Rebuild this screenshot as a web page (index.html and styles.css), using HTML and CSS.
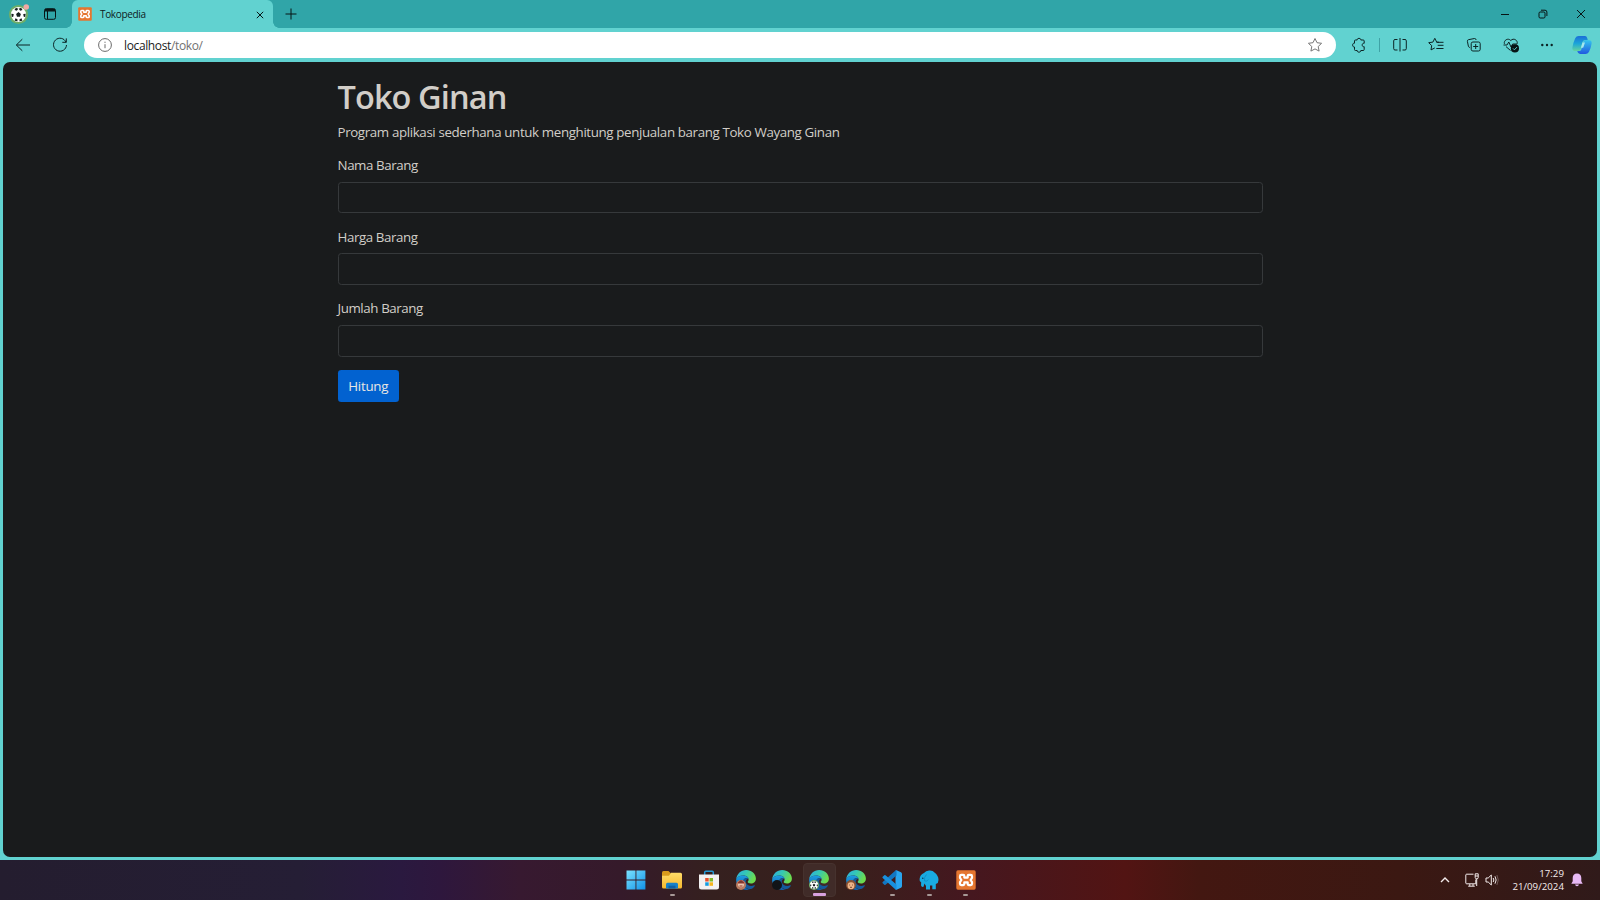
FILE: index.html
```html
<!DOCTYPE html>
<html lang="id">
<head>
<meta charset="utf-8">
<title>Tokopedia</title>
<link rel="stylesheet" href="styles.css">
</head>
<body>
<svg class="defs" width="0" height="0">
  <defs>
    <linearGradient id="edgeBlue" x1="0" y1="0" x2="0" y2="1"><stop offset="0" stop-color="#1b9de2"/><stop offset="1" stop-color="#1161b0"/></linearGradient>
    <linearGradient id="edgeGreen" x1="0" y1="0" x2="1" y2=".4"><stop offset="0" stop-color="#2aa9e8"/><stop offset=".5" stop-color="#35c8b4"/><stop offset="1" stop-color="#6cdc4e"/></linearGradient>
    <linearGradient id="winBlue" x1="0" y1="0" x2="1" y2="1"><stop offset="0" stop-color="#7be3ff"/><stop offset="1" stop-color="#1192e8"/></linearGradient>
    <linearGradient id="folder" x1="0" y1="0" x2="0" y2="1"><stop offset="0" stop-color="#ffdc69"/><stop offset="1" stop-color="#f5b82e"/></linearGradient>
    <linearGradient id="copA" x1="0" y1="0" x2="0" y2="1"><stop offset="0" stop-color="#1a6ed8"/><stop offset=".5" stop-color="#1ba5d8"/><stop offset="1" stop-color="#63d3a0"/></linearGradient>
    <linearGradient id="copB" x1="0" y1="0" x2="0" y2="1"><stop offset="0" stop-color="#35c4ee"/><stop offset="1" stop-color="#2159e0"/></linearGradient>
    <symbol id="edge" viewBox="0 0 20 20">
      <path d="M.2 9.300C.8 4 5 .1 10.200.1 15.600.1 19.900 3.900 19.900 8.500c0 3.200-2.300 5-4.900 5-2.100 0-3.300-.8-3.300-1.500 0-.7.9-.9.9-2.500C12.600 7.200 10.200 5.600 7.300 5.600 3.900 5.600 1 7.300.2 9.300z" fill="url(#edgeGreen)"/>
      <path d="M.1 10C.300 7.400 3.500 5.600 7.300 5.600c2.800 0 5.300 1.600 5.300 3.900-.6-.9-1.700-1.400-2.800-1.200-2.200.5-3.200 2.900-2.700 5.200.6 3.100 3.500 5.800 6.500 6C6.600 21.300.1 16.500.1 10z" fill="url(#edgeBlue)"/>
      <path d="M9.800 8.300C7.200 8.800 6.500 11.600 7.200 14c1 3.400 4.500 5.700 7.500 5.100 1.700-.6 3.100-1.700 4.100-3.200.3-.5-.1-.8-.6-.6-3.600 1.500-7.300.1-8.200-2.500-.6-1.900.2-3.400 1.900-4.100-.6-.4-1.300-.5-2.100-.4z" fill="#145a9c"/>
    </symbol>
    <symbol id="xampp" viewBox="0 0 20 20">
      <rect x=".3" y=".3" width="19.400" height="19.400" rx="1.600" fill="#e57630"/>
      <path d="M5.300 4.900H7.300Q8.300 4.900 8.300 5.900V7.600H11.700V5.900Q11.700 4.900 12.700 4.900H14.700Q16 4.900 16 6.200V7.800L14.600 10 16 12.200V13.800Q16 15.100 14.700 15.100H12.700Q11.700 15.100 11.700 14.100V12.400H8.300V14.100Q8.300 15.100 7.300 15.100H5.300Q4 15.100 4 13.800V12.200L5.400 10 4 7.800V6.200Q4 4.900 5.300 4.900z" fill="none" stroke="#fff" stroke-width="2.200" stroke-linejoin="round"/>
    </symbol>
    <symbol id="ball" viewBox="0 0 20 20">
      <circle cx="10" cy="10" r="9.500" fill="#fff"/>
      <path d="M10 7l3 2.300-1.100 3.500H8.100L7 9.300zM6.700 1.500l3 1.200-1.800 2.500-2.900-.7zM13.300 1.500l-3 1.200 1.800 2.500 2.900-.7zM1 9L4 9.500l-.4 3-2 1zM19 9L16 9.500l.4 3 2 1zM5.200 17.700l1-2.900 2.500 1.100v2.500zM14.800 17.700l-1-2.900-2.500 1.100v2.500z" fill="#17201f"/>
    </symbol>
  </defs>
</svg>

<div class="screen">
  <header class="tabbar">
    <svg class="avatar" viewBox="0 0 22 22"><circle cx="10.500" cy="11.500" r="9.600" fill="#6fae68"/><use href="#ball" x="2.500" y="3.500" width="16" height="16"/><circle cx="18.200" cy="4" r="2.800" fill="#f0a9a5"/></svg>
    <svg class="workspace ink" viewBox="0 0 14 14"><rect x="1.500" y="1.700" width="11" height="10.600" rx="1.800"/><path d="M1.500 4H12.500M4.500 4V12"/><path d="M2 2.900H12" stroke-width="2"/></svg>
    <div class="tab">
      <svg class="favicon"><use href="#xampp"/></svg>
      <span class="tab-title">Tokopedia</span>
      <svg class="tab-close ink" viewBox="0 0 8 8"><path d="M.8.8L7.200 7.200M7.200.8L.8 7.200"/></svg>
    </div>
    <svg class="newtab ink" viewBox="0 0 12 12"><path d="M6 .5V11.500M.5 6H11.500"/></svg>
    <div class="window-controls">
      <svg class="ink" viewBox="0 0 10 10"><path d="M1 5.500H9"/></svg>
      <svg class="ink" viewBox="0 0 10 10"><rect x="1" y="3" width="6" height="6" rx="1.200"/><path d="M3 1.200H7Q8.900 1.200 8.900 3.100V7"/></svg>
      <svg class="ink" viewBox="0 0 10 10"><path d="M1 1L9 9M9 1L1 9"/></svg>
    </div>
  </header>

  <nav class="toolbar">
    <svg class="tool back" viewBox="0 0 24 24"><path d="M19 12H5.500M11.300 6.200L5.300 12l6 5.800"/></svg>
    <svg class="tool reload" viewBox="0 0 24 24"><path d="M18 9.200A6.500 6.500 0 1 0 18.500 12M18.300 5.400V9.300H14.300"/></svg>
    <div class="address">
      <svg class="info" viewBox="0 0 14 14"><circle cx="7" cy="7" r="6.400"/><path d="M7 6.200V10.200M7 3.700V4.900"/></svg>
      <span class="url">localhost<span class="path">/toko/</span></span>
      <svg class="star" viewBox="0 0 16 16"><path d="M8 1.500l2 4.200 4.600.6-3.400 3.200.9 4.600L8 11.900l-4.100 2.200.9-4.600L1.400 6.300 6 5.700z"/></svg>
    </div>
    <svg class="tool puzzle" viewBox="0 0 24 24"><path d="M8.500 7H10.200C9.700 4.800 14.300 4.800 13.800 7H16.200Q17.200 7 17.200 8V10.300C14.500 9.700 14.500 14.300 17.200 13.700V16.500Q17.200 17.500 16.200 17.500H13.800C14.300 19.700 9.700 19.700 10.200 17.500H8.500Q7.500 17.500 7.500 16.500V14C5 14.400 5 9.700 7.500 10.200V8Q7.500 7 8.500 7z"/></svg>
    <i class="divider"></i>
    <svg class="tool split" viewBox="0 0 24 24"><path d="M9.500 6.500H7Q5.700 6.500 5.700 7.800V15.700Q5.700 17 7 17H9.500M14.500 6.500H17Q18.300 6.500 18.300 7.800V15.700Q18.300 17 17 17H14.500M12 5V18.500"/></svg>
    <svg class="tool" viewBox="0 0 24 24"><path d="M14 9.300L11.700 9.100 9.800 5.300 7.900 9.100 3.700 9.700 6.700 12.600 6 16.900 9.800 14.900M11.500 9.300H18.500M12.700 12.300H18.500M11.300 15.500H18.500"/></svg>
    <svg class="tool" viewBox="0 0 24 24"><rect x="9.200" y="9" width="9" height="9" rx="1.700"/><path d="M13.700 11V16M11.200 13.500H16.200M7.800 14.500Q6.700 14.300 6.400 13.300L5.400 8.300Q5.200 7 6.400 6.700L12.500 5.500Q13.700 5.300 14.200 7"/></svg>
    <svg class="tool" viewBox="0 0 24 24"><path d="M5.400 10.800C4.500 7.300 9 4.500 11.800 7.500 14.600 4.500 19 7.200 18.200 10.800M7 13.600L11.500 17.500M4.500 12H8L9.800 9 12 14 13.700 11H18"/><circle cx="15.900" cy="15.400" r="4.100" fill="#071415" stroke="none"/><path d="M14 15.400l1.400 1.400 2.600-2.700" stroke="#61d2d0"/></svg>
    <svg class="tool dots" viewBox="0 0 24 24"><circle cx="7.300" cy="12" r="1.200"/><circle cx="12" cy="12" r="1.200"/><circle cx="16.700" cy="12" r="1.200"/></svg>
    <svg class="copilot" viewBox="0 0 20 20"><path d="M6.700 1H13Q14.600 1 15.200 3L15.800 5.200H12.500Q11 5.200 10.500 7L8.500 14.500Q8 16 6 16H3Q0 16 .4 12.600 1 8 3.200 3.200 4.300 1 6.700 1z" fill="url(#copA)"/><path d="M13.500 5.200H17Q20 5.300 19.600 8.500 19 13 16.900 17 15.800 19 13.400 19H8Q6 19 5.200 16H7.500Q9 15.800 9.500 14L11.300 7Q11.800 5.200 13.500 5.200z" fill="url(#copB)"/><path d="M10.500 7.500H13L11.200 12.800H8.900z" fill="#a5e7ee"/></svg>
  </nav>

  <main class="viewport">
    <div class="container">
      <h1>Toko Ginan</h1>
      <p>Program aplikasi sederhana untuk menghitung penjualan barang Toko Wayang Ginan</p>
      <form>
        <div class="field"><label for="nama">Nama Barang</label><input id="nama" type="text"></div>
        <div class="field"><label for="harga">Harga Barang</label><input id="harga" type="text"></div>
        <div class="field"><label for="jumlah">Jumlah Barang</label><input id="jumlah" type="text"></div>
        <button type="button">Hitung</button>
      </form>
    </div>
  </main>

  <footer class="taskbar">
    <div class="apps">
      <div class="app"><svg viewBox="0 0 20 20"><path d="M.5.500h9v9h-9zM10.400.500h9v9h-9zM.5 10.400h9v9h-9zM10.400 10.400h9v9h-9z" fill="url(#winBlue)"/></svg></div>
      <div class="app running"><svg viewBox="0 0 20 20"><path d="M0 2.500Q0 1 1.500 1H6.500L9 3.500V7H0z" fill="#d99a1c"/><path d="M0 5.700H7L9 2.800H18.500Q20 2.800 20 4.300V17Q20 18.500 18.500 18.500H1.500Q0 18.500 0 17z" fill="url(#folder)"/><path d="M4 18.500V14.200Q4 12.700 5.500 12.700H14.500Q16 12.700 16 14.200V18.500z" fill="#1681c9"/><path d="M6.500 15.700H13.500V18.500H6.500z" fill="#0d5fa5"/></svg></div>
      <div class="app"><svg viewBox="0 0 20 20"><path d="M5.700 5V2.300Q5.700 1.200 6.800 1.200H13.200Q14.300 1.200 14.300 2.300V5" fill="none" stroke="#2498d5" stroke-width="1.500"/><path d="M0 4.500H20V17Q20 19.500 17.500 19.500H2.500Q0 19.500 0 17z" fill="#f3f1f2"/><path d="M6.200 8h3.500v3.500H6.200z" fill="#e9502c"/><path d="M10.500 8H14v3.500h-3.500z" fill="#7fb927"/><path d="M6.200 12.300h3.500v3.500H6.200z" fill="#159de2"/><path d="M10.500 12.300H14v3.500h-3.500z" fill="#f6b51d"/></svg></div>
      <div class="app"><svg viewBox="0 0 20 20"><use href="#edge"/><circle cx="5" cy="15" r="5" fill="#b97b60"/><circle cx="5" cy="14.300" r="3" fill="#e8c6b0"/><path d="M2 13Q5 8.500 8 13zM3.500 16h3" fill="#614136" stroke="#9a302a"/></svg></div>
      <div class="app"><svg viewBox="0 0 20 20"><use href="#edge"/><circle cx="5" cy="15" r="5" fill="#111418"/></svg></div>
      <div class="app running active"><svg viewBox="0 0 20 20"><use href="#edge"/><circle cx="5" cy="15" r="5" fill="#6fae68"/><use href="#ball" x=".6" y="10.600" width="8.800" height="8.800"/></svg></div>
      <div class="app"><svg viewBox="0 0 20 20"><use href="#edge"/><circle cx="5" cy="15" r="5" fill="#8a5334"/><circle cx="5" cy="15.700" r="3.400" fill="#efb58a"/><path d="M3.300 15h.8M6 15h.8M4 17.300h2" stroke="#57301d" stroke-width=".8"/></svg></div>
      <div class="app running"><svg viewBox="0 0 20 20"><path d="M14.500.200L19 2.300Q20 2.800 20 4V16Q20 17.200 19 17.700L14.500 19.800 13.500 19.300V.700z" fill="#2aa5ee"/><path d="M14.500 5.500L3.500 14.800Q2.900 15.200 2.300 14.800L.7 13.300Q0 12.700.7 12L13.500.500Q14 .1 14.500.200z" fill="#1276c2"/><path d="M14.500 14.500L3.500 5.200Q2.900 4.800 2.300 5.200L.7 6.700Q0 7.300.7 8L13.500 19.500Q14 19.900 14.500 19.800z" fill="#188fdd"/></svg></div>
      <div class="app running"><svg viewBox="0 0 20 20"><path d="M.6 9Q1 4.500 5 3 7 .3 10.500.5 14 .3 15.500 2.500 19.500 5.500 19.500 10L18.800 13 16.800 14V19.200H13.300V15.500H11V19.500H7V16L5.500 13.500 4.500 16.800Q2.500 17.500 2 15.200L2.200 12.500Q.2 11.500.6 9z" fill="#19aae2"/><path d="M7.500 4.500Q4.800 7 5.500 10.800 8 12.200 9.300 9.500" fill="none" stroke="#0d8cc4" stroke-width=".8"/><circle cx="3.800" cy="8.300" r=".7" fill="#092e4a"/></svg></div>
      <div class="app running"><svg viewBox="0 0 20 20"><use href="#xampp"/></svg></div>
    </div>
    <div class="tray">
      <svg class="chevron" viewBox="0 0 10 10"><path d="M1 7L5 3 9 7"/></svg>
      <svg class="network" viewBox="0 0 14 14"><path d="M8.500 1.200H1.600Q.8 1.200.8 2V10Q.8 10.800 1.600 10.800H10.800V6.500M4.800 11V13M8 11V13M3.200 13.200H9.800M10.200.8H13.200V4.500Q13.200 5.800 11.800 5.800 10.200 5.800 10.200 4.500zM10.200 3H13.200M11.700 5.800V13"/></svg>
      <svg class="volume" viewBox="0 0 14 14"><path d="M1 5H3.200L6.300 2V12L3.200 9H1zM8.200 5Q9.500 7 8.200 9M10 3.300Q12.300 7 10 10.700"/><path d="M11.900 2Q14.700 7 11.900 12" opacity=".3"/></svg>
      <div class="clock"><span>17:29</span><span>21/09/2024</span></div>
      <svg class="bell" viewBox="0 0 12 14"><path d="M6 .5Q10.200.700 10.300 5V8.200L11.700 10.800H.3L1.700 8.200V5Q1.800.700 6 .5zM4 11.500H8Q7.500 13.300 6 13.300T4 11.500z"/></svg>
    </div>
  </footer>
</div>
</body>
</html>
```

FILE: styles.css
```css
* { box-sizing: border-box; }
body { margin: 0; background: #61d2d0; font-family: "Open Sans", "Noto Sans", sans-serif; }
.defs { display: block; height: 0; }
svg { display: block; flex: none; }
.screen { display: flex; flex-direction: column; width: 1600px; height: 900px; overflow: hidden; background: #61d2d0; }

.tabbar { display: flex; align-items: center; height: 28px; flex: none; background: #30a5a8; padding-left: 8px; }
.ink { fill: none; stroke: #071415; stroke-width: 1; }
.avatar { width: 22px; height: 22px; }
.workspace { width: 14px; height: 14px; margin-left: 13px; }
.tab { position: relative; display: flex; align-items: center; width: 200.500px; height: 28px; margin-left: 15px; padding: 0 9px 0 6px; background: #61d2d0; border-radius: 6px 6px 0 0; }
.tab::before, .tab::after { content: ""; position: absolute; bottom: 0; width: 6px; height: 6px; }
.tab::before { left: -6px; background: radial-gradient(circle at 0 0, transparent 5.500px, #61d2d0 6px); }
.tab::after { right: -6px; background: radial-gradient(circle at 100% 0, transparent 5.500px, #61d2d0 6px); }
.favicon { width: 14px; height: 14px; }
.tab-title { margin-left: 8px; font-size: 10px; letter-spacing: -.33px; line-height: 14px; color: #0d2021; flex: 1; }
.tab-close { width: 8px; height: 8px; margin-top: 1px; }
.newtab { width: 12px; height: 12px; margin-left: 12px; }
.window-controls { display: flex; gap: 28px; margin-left: auto; margin-right: 14px; }
.window-controls svg { width: 10px; height: 10px; }

.toolbar { display: flex; align-items: center; height: 34px; flex: none; padding: 0 8px 0 11px; }
.tool { width: 24px; height: 24px; margin-left: 13px; fill: none; stroke: #0c2425; stroke-width: 1; }
.back { margin-left: 0; }
.address { display: flex; align-items: center; width: 1252px; height: 26px; margin-left: 11.500px; padding: 0 12.500px 0 14.500px; border-radius: 13px; background: #fff; }
.info { width: 14px; height: 14px; fill: none; stroke: #6a6a6a; }
.url { flex: 1; margin-left: 12px; padding-top: 1px; font-size: 12px; line-height: 16px; letter-spacing: -.37px; color: #1b1b1b; }
.path { color: #717171; }
.star { width: 16px; height: 16px; fill: none; stroke: #777; }
.puzzle { margin-left: 11.500px; }
.divider { width: 1px; height: 14px; margin-left: 8px; background: #3fa3a6; }
.split { margin-left: 8px; }
.dots { margin-left: 11.500px; fill: #0c2425; stroke: none; }
.copilot { width: 20px; height: 20px; margin-left: 13px; }

.viewport { height: 795px; flex: none; margin: 0 3px; border-radius: 7px; background: #191b1c; color: #d2cec8; }
.container { width: 925px; margin: 0 auto; padding-top: 15px; font-size: 13.330px; line-height: 20px; }
h1 { margin: 0 0 4.670px; font-size: 32.500px; line-height: 40px; font-weight: 600; letter-spacing: -.9px; }
p { margin: 0 0 13.330px; letter-spacing: -.37px; }
.field { margin-bottom: 13.330px; }
label { display: block; width: fit-content; margin-bottom: 6.670px; letter-spacing: -.41px; }
input { display: block; width: 100%; height: 31.670px; border: 1px solid #36393b; border-radius: 3.300px; background: #191b1c; color: #d2cec8; }
button { display: block; width: 61.500px; height: 31.670px; padding: 0; border: 0; border-radius: 3.300px; background: #0262d0; color: #e8e6e3; font: 13.330px/20px "Open Sans", "Noto Sans", sans-serif; letter-spacing: -.25px; }

.taskbar { display: flex; align-items: center; justify-content: flex-end; height: 40px; flex: none; margin-top: 3px; padding-left: 617.250px; background: linear-gradient(90deg, #241d2f 0, #251e35 300px, #2a193f 400px, #2e173d 440px, #371930 520px, #351a2a 620px, #35201f 710px, #38201c 840px, #45171f 970px, #521413 1125px, #431711 1200px, #3b1812 1400px, #301a1a 1600px); }
.apps { display: flex; }
.app { position: relative; display: flex; align-items: center; justify-content: center; width: 36.700px; height: 40px; }
.app > svg { width: 20px; height: 20px; position: relative; }
.active::before { content: ""; position: absolute; inset: 3px 1px 3px 2px; border: 1px solid #46322e; border-radius: 4px; background: #402b28; }
.running::after { content: ""; position: absolute; bottom: 4px; left: 50%; width: 5px; height: 2px; margin-left: -2.500px; border-radius: 1px; background: #a79997; }
.active::after { width: 13px; margin-left: -6.500px; height: 3px; background: #d8a2df; }
.tray { display: flex; align-items: center; margin-left: auto; padding-right: 17px; }
.tray svg { fill: none; stroke: #f4ecec; stroke-width: 1; }
.tray .chevron { width: 10px; height: 10px; stroke-width: 1.400; }
.network { width: 14px; height: 14px; margin-left: 15px; }
.volume { width: 14px; height: 14px; margin-left: 6px; }
.clock { display: flex; flex-direction: column; align-items: flex-end; width: 65px; font-size: 9.700px; line-height: 13px; color: #f6eeee; letter-spacing: .02px; }
.tray .bell { width: 12px; height: 14px; margin-left: 7px; fill: #e8b9f5; stroke: none; }
```
